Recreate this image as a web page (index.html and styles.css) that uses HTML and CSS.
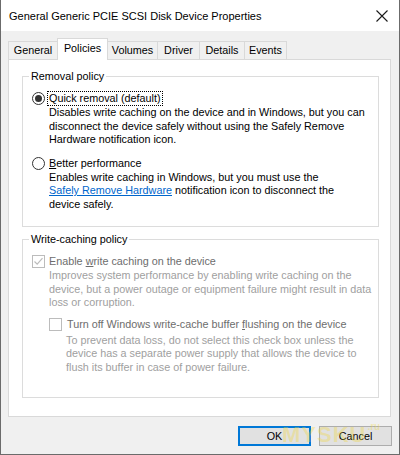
FILE: index.html
```html
<!DOCTYPE html>
<html>
<head>
<meta charset="utf-8">
<link rel="stylesheet" href="styles.css">
</head>
<body>
<div class="window">
  <div class="titlebar">
    <span class="title">General Generic PCIE SCSI Disk Device Properties</span>
    <svg class="close" width="12" height="12" viewBox="0 0 12 12"><path d="M0.5 0.5 L11.5 11.5 M11.5 0.5 L0.5 11.5" stroke="#1a1a1a" stroke-width="1.1" fill="none"/></svg>
  </div>
  <div class="body">
    <div class="tabs">
      <div class="tab t-general">General</div>
      <div class="tab tab-active t-policies">Policies</div>
      <div class="tab t-volumes">Volumes</div>
      <div class="tab t-driver">Driver</div>
      <div class="tab t-details">Details</div>
      <div class="tab t-events">Events</div>
    </div>
    <div class="panel">
      <fieldset class="group g1">
        <legend>Removal policy</legend>
        <div class="option">
          <span class="radio checked"></span>
          <span class="label focus">Quick removal (default)</span>
        </div>
        <p class="desc">Disables write caching on the device and in Windows, but you can<br>disconnect the device safely without using the Safely Remove<br>Hardware notification icon.</p>
        <div class="option opt2">
          <span class="radio"></span>
          <span class="label"><u>B</u>etter performance</span>
        </div>
        <p class="desc">Enables write caching in Windows, but you must use the<br><a class="link" href="#">Safely Remove Hardware</a> notification icon to disconnect the<br>device safely.</p>
      </fieldset>
      <fieldset class="group g2">
        <legend>Write-caching policy</legend>
        <div class="option">
          <span class="check"><svg width="11" height="11" viewBox="0 0 11 11"><path d="M1.5 5.5 L4.2 8.2 L9.5 2.2" stroke="#bcbcbc" stroke-width="1.2" fill="none"/></svg></span>
          <span class="label disabled">Enable <u>w</u>rite caching on the device</span>
        </div>
        <p class="desc disabled-desc">Improves system performance by enabling write caching on the<br>device, but a power outage or equipment failure might result in data<br>loss or corruption.</p>
        <div class="option opt-sub">
          <span class="check"></span>
          <span class="label disabled">Turn off Windows write-cache buffer <u>f</u>lushing on the device</span>
        </div>
        <p class="desc desc-sub disabled-desc">To prevent data loss, do not select this check box unless the<br>device has a separate power supply that allows the device to<br>flush its buffer in case of power failure.</p>
      </fieldset>
    </div>
    <div class="buttons">
      <button class="btn btn-default">OK</button>
      <button class="btn">Cancel</button>
    </div>
  </div>
  <div class="watermark"><span class="wm-main">MYSKU</span><span class="wm-ru">.ru</span></div>
</div>
</body>
</html>
```
FILE: styles.css
```css
html, body {
  margin: 0;
  padding: 0;
  background: #f0f0f0;
}
body {
  font-family: "Liberation Sans", Arial, sans-serif;
  font-size: 10.8px;
  color: #000;
}
.window {
  position: relative;
  width: 400px;
  height: 455px;
  box-sizing: border-box;
  border: 1px solid #6b6b6b;
  border-top: 0;
  background: #f0f0f0;
  display: flex;
  flex-direction: column;
  overflow: hidden;
}
.titlebar {
  height: 31px;
  flex: none;
  background: #fff;
  display: flex;
  align-items: center;
  justify-content: space-between;
  padding: 0 11px 0 8px;
}
.title {
  font-size: 11px;
  color: #000;
}
.close {
  display: block;
}
.body {
  flex: 1;
  display: flex;
  flex-direction: column;
  padding: 7px 8px 0 7px;
}
.tabs {
  height: 21px;
  display: flex;
  align-items: flex-end;
  flex: none;
}
.tab {
  box-sizing: border-box;
  height: 18px;
  border: 1px solid #d9d9d9;
  border-bottom: 0;
  margin-right: -1px;
  text-align: center;
  line-height: 16px;
  background: #f0f0f0;
}
.tab-active {
  height: 22px;
  line-height: 18px;
  background: #fff;
  margin-bottom: -1px;
  position: relative;
  z-index: 1;
}
.t-general { width: 50px; }
.t-policies { width: 51px; }
.t-volumes { width: 51px; }
.t-driver { width: 43px; }
.t-details { width: 46px; }
.t-events { width: 43px; }
.panel {
  flex: none;
  height: 358px;
  box-sizing: border-box;
  background: #fff;
  border: 1px solid #d9d9d9;
  padding: 0 11px 0 13px;
}
.group {
  margin: 0;
  border: 1px solid #dcdcdc;
  padding: 9px 8px 15px 9px;
  min-width: 0;
}
.g1 {
  margin-top: 9px;
}
.g2 {
  margin-top: 5px;
  padding-bottom: 23px;
}
legend {
  padding: 0 2px;
  margin-left: -3px;
  line-height: 14px;
}
.option {
  display: flex;
  align-items: center;
  height: 13px;
  gap: 3px;
}
.opt2 {
  margin-top: 10px;
}
.opt-sub {
  margin-top: 8px;
  margin-left: 17px;
  gap: 4px;
}
.label {
  white-space: nowrap;
  line-height: 13px;
  padding: 0 1px;
}
.focus {
  outline: 1px dotted #000;
  outline-offset: 0;
}
.radio {
  width: 13px;
  height: 13px;
  box-sizing: border-box;
  border: 1px solid #333;
  border-radius: 50%;
  background: #fff;
  display: flex;
  align-items: center;
  justify-content: center;
  flex: none;
}
.radio.checked::after {
  content: "";
  width: 7px;
  height: 7px;
  border-radius: 50%;
  background: #333;
}
.check {
  width: 13px;
  height: 13px;
  box-sizing: border-box;
  border: 1px solid #bcbcbc;
  background: #fff;
  flex: none;
  display: flex;
}
.check svg {
  display: block;
}
.desc {
  margin: 1px 0 0 17px;
  line-height: 13.5px;
  white-space: nowrap;
}
.desc-sub {
  margin-top: 3px;
  margin-left: 34px;
}
.link {
  color: #0066cc;
  text-decoration: underline;
}
.disabled {
  color: #6d6d6d;
}
.disabled-desc {
  color: #a0a0a0;
}
.buttons {
  display: flex;
  justify-content: flex-end;
  gap: 8px;
  margin-top: 9px;
  margin-right: -1px;
}
.btn {
  width: 73px;
  height: 20px;
  box-sizing: border-box;
  border: 1px solid #adadad;
  background: #e1e1e1;
  font-family: inherit;
  font-size: 10.8px;
  color: #000;
  padding: 0;
  margin: 0;
}
.btn-default {
  border: 2px solid #0078d7;
}
.watermark {
  position: absolute;
  left: 281px;
  top: 424px;
  display: flex;
  align-items: flex-start;
  color: rgba(240, 215, 60, 0.35);
  font-weight: bold;
  pointer-events: none;
}
.wm-main {
  font-size: 22px;
  line-height: 22px;
  letter-spacing: 1px;
}
.wm-ru {
  font-size: 10px;
  line-height: 10px;
  margin-top: -2px;
  margin-left: 1px;
}
```
